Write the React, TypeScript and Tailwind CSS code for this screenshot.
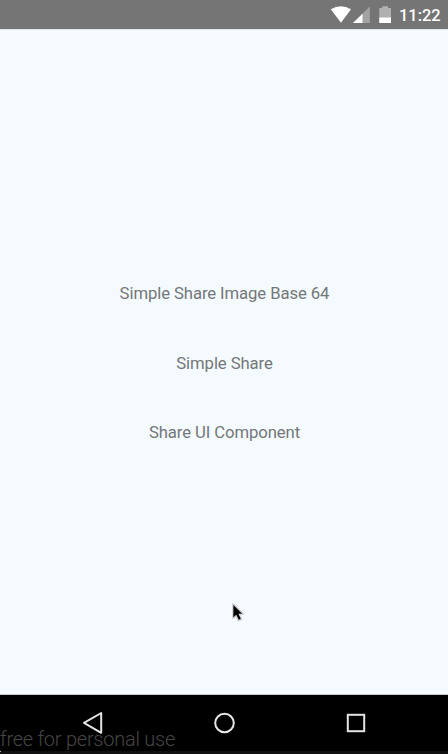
import React from "react";

const options = ["Simple Share Image Base 64", "Simple Share", "Share UI Component"];

function StatusBar() {
  return (
    <header className="flex h-[29px] shrink-0 items-center justify-end bg-[#757575] pr-[7px] text-white">
      <svg width="68" height="29" viewBox="0 0 68 29" className="mr-[1px] shrink-0">
        <path d="M6.8 9.2Q17 3.2 27 9.2L17 22.8Z" fill="#fff" />
        <path d="M45.8 6.5V23H29Z" fill="#a3a3a3" />
        <path d="M38.5 13.7V23H29Z" fill="#fff" />
        <path d="M55.3 8H58.3V6.3H64V8H67V23H55.3Z" fill="#b0b0b0" />
        <path d="M55.3 17.5H67V23H55.3Z" fill="#fff" />
      </svg>
      <span className="ml-[6px] w-[42px] whitespace-nowrap pt-[3px] text-[16.4px] leading-none font-medium">11:22</span>
    </header>
  );
}

function Cursor() {
  return (
    <svg width="15" height="22" viewBox="0 0 15 22" className="absolute top-[602px] left-[231px]">
      <path d="M2 2.3V16.1L5.2 13.2L7.6 18.3L10.3 17.1L7.9 12H11.9Z" fill="#000" stroke="#c4c7ca" strokeWidth="2" strokeLinejoin="round" />
      <path d="M2 2.3V16.1L5.2 13.2L7.6 18.3L10.3 17.1L7.9 12H11.9Z" fill="#000" stroke="#fff" strokeWidth=".6" />
    </svg>
  );
}

function NavigationBar() {
  return (
    <footer className="relative h-[59px] shrink-0 overflow-hidden bg-black">
      <div className="flex h-[56px] items-center justify-between pr-[82px] pl-[82px]">
        <svg width="22" height="24" viewBox="0 0 22 24" fill="none" stroke="#e4e4e4" strokeWidth="2" strokeLinejoin="round">
          <path d="M2 11.8L19.2 2V21.8Z" />
        </svg>
        <svg width="22" height="22" viewBox="0 0 22 22" fill="none" stroke="#e8e8e8" strokeWidth="2">
          <circle cx="10.5" cy="11" r="9.3" />
        </svg>
        <svg width="20" height="20" viewBox="0 0 20 20" fill="none" stroke="#e4e4e4" strokeWidth="2">
          <rect x="1.8" y="1.8" width="16.4" height="16.4" />
        </svg>
      </div>
      <div className="h-[3px] bg-[#101010]" />
      <span className="absolute top-[32px] left-0 whitespace-nowrap text-[20px] leading-[24px] font-light tracking-[-0.25px] text-[#454545]">free for personal use</span>
      <span className="absolute bottom-[2px] left-0 h-px w-px bg-[#bbb]" />
    </footer>
  );
}

export default function App() {
  return (
    <div className="relative flex h-[754px] w-[448px] flex-col overflow-hidden bg-[#f5faff] font-['Roboto','Noto_Sans',sans-serif]">
      <StatusBar />
      <main className="flex flex-1 flex-col items-center justify-center border-t border-b border-t-[#e2e1e6] border-b-[#c8ccce] pt-[3px] pl-px">
        {options.map((option) => (
          <button key={option} className="h-[69.5px] text-[16.7px] leading-5 tracking-[-0.09px] text-[#737778]">{option}</button>
        ))}
      </main>
      <NavigationBar />
      <Cursor />
    </div>
  );
}
